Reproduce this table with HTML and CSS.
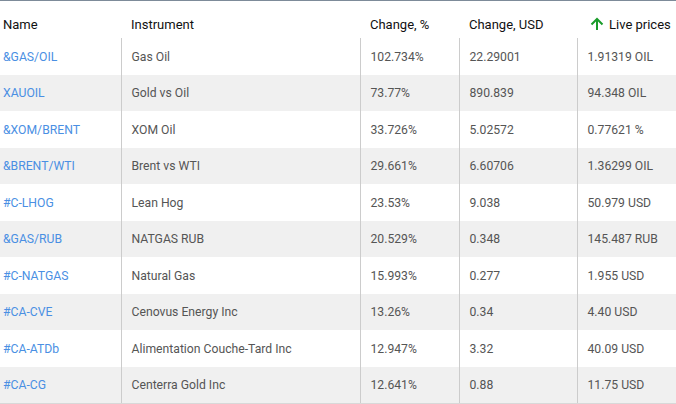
FILE: index.html
```html
<!DOCTYPE html>
<html>
<head>
<meta charset="utf-8">
<link rel="stylesheet" href="styles.css">
</head>
<body>
<div class="wrap">
<table class="prices">
  <colgroup>
    <col class="c1"><col class="c2"><col class="c3"><col class="c4"><col class="c5">
  </colgroup>
  <thead>
    <tr>
      <th class="first">Name</th>
      <th>Instrument</th>
      <th>Change, %</th>
      <th>Change, USD</th>
      <th class="live"><svg class="arrow" width="14" height="14" viewBox="0 0 14 14"><path d="M7 13V2M1.5 7.5L7 2l5.5 5.5" fill="none" stroke="#1a9c2a" stroke-width="2"/></svg>Live prices</th>
    </tr>
  </thead>
  <tbody>
    <tr><td class="first"><a href="#">&amp;GAS/OIL</a></td><td>Gas Oil</td><td>102.734%</td><td>22.29001</td><td>1.91319 OIL</td></tr>
    <tr class="alt"><td class="first"><a href="#">XAUOIL</a></td><td>Gold vs Oil</td><td>73.77%</td><td>890.839</td><td>94.348 OIL</td></tr>
    <tr><td class="first"><a href="#">&amp;XOM/BRENT</a></td><td>XOM Oil</td><td>33.726%</td><td>5.02572</td><td>0.77621 %</td></tr>
    <tr class="alt"><td class="first"><a href="#">&amp;BRENT/WTI</a></td><td>Brent vs WTI</td><td>29.661%</td><td>6.60706</td><td>1.36299 OIL</td></tr>
    <tr><td class="first"><a href="#">#C-LHOG</a></td><td>Lean Hog</td><td>23.53%</td><td>9.038</td><td>50.979 USD</td></tr>
    <tr class="alt"><td class="first"><a href="#">&amp;GAS/RUB</a></td><td>NATGAS RUB</td><td>20.529%</td><td>0.348</td><td>145.487 RUB</td></tr>
    <tr><td class="first"><a href="#">#C-NATGAS</a></td><td>Natural Gas</td><td>15.993%</td><td>0.277</td><td>1.955 USD</td></tr>
    <tr class="alt"><td class="first"><a href="#">#CA-CVE</a></td><td>Cenovus Energy Inc</td><td>13.26%</td><td>0.34</td><td>4.40 USD</td></tr>
    <tr><td class="first"><a href="#">#CA-ATDb</a></td><td>Alimentation Couche-Tard Inc</td><td>12.947%</td><td>3.32</td><td>40.09 USD</td></tr>
    <tr class="alt"><td class="first"><a href="#">#CA-CG</a></td><td>Centerra Gold Inc</td><td>12.641%</td><td>0.88</td><td>11.75 USD</td></tr>
  </tbody>
</table>
</div>
</body>
</html>
```

FILE: styles.css
```css
html, body {
  margin: 0;
  padding: 0;
  background: #ffffff;
}
body {
  font-family: Roboto, "Liberation Sans", Arial, sans-serif;
}
.wrap {
  width: 676px;
  height: 404px;
  overflow: hidden;
  border-top: 1px solid #7d8b99;
  box-sizing: border-box;
}
.prices {
  width: 676px;
  border-collapse: collapse;
  table-layout: fixed;
}
.c1 { width: 121px; }
.c2 { width: 239px; }
.c3 { width: 99px; }
.c4 { width: 118px; }
.c5 { width: 99px; }
.prices th {
  height: 37px;
  padding: 10px 0 0 10px;
  text-align: left;
  font-weight: 400;
  font-size: 13px;
  color: #111;
  vertical-align: middle;
  box-sizing: border-box;
}
.prices th.first, .prices td.first {
  padding-left: 3px;
}
.prices th.live {
  padding-left: 13px;
}
.arrow {
  display: inline-block;
  vertical-align: -2px;
  margin-right: 5px;
}
.prices td {
  height: 36.5px;
  padding: 1px 0 0 10px;
  font-size: 12.2px;
  color: #555;
  vertical-align: middle;
  border-left: 1px solid #cccccc;
  box-sizing: border-box;
  white-space: nowrap;
}
.prices td.first {
  border-left: none;
}
.prices tbody tr:last-child td {
  border-bottom: 1px solid #d8d8d8;
}
.prices tr.alt td {
  background: #f0f0f0;
}
.prices a {
  color: #4a8fe3;
  text-decoration: none;
}
```
